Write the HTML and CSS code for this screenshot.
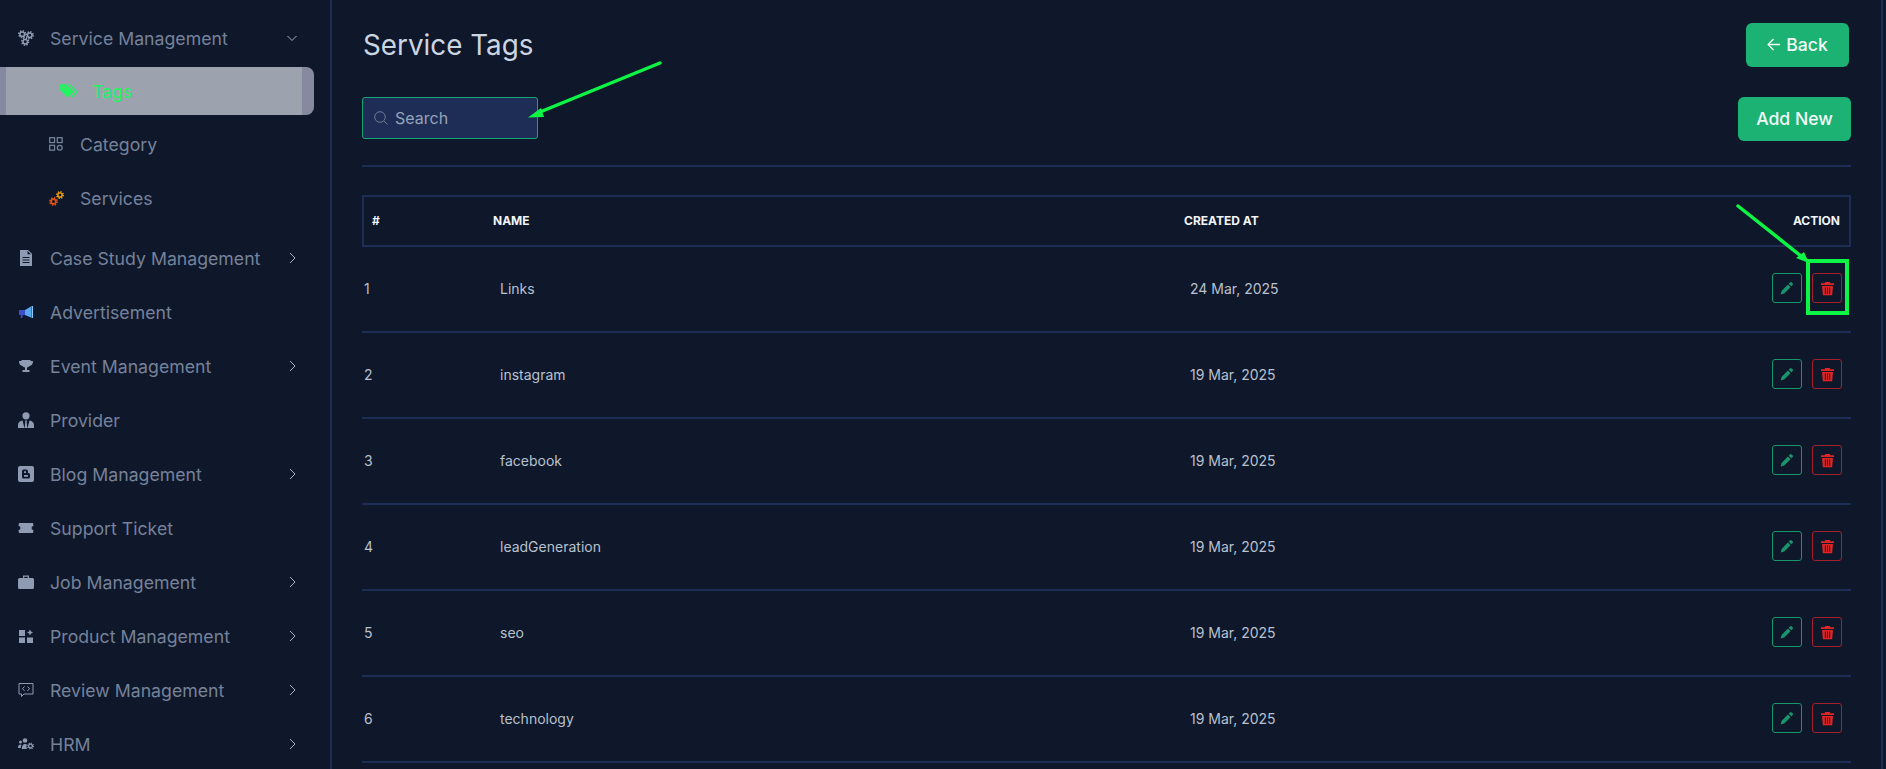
FILE: index.html
```html
<!DOCTYPE html>
<html lang="en">
    <head>
        <meta charset="UTF-8" />
        <meta name="viewport" content="width=device-width, initial-scale=1.0" />
        <title>Service Tags</title>
        <link rel="stylesheet" href="styles.css">
    </head>
    <body>
        <svg class="defs" width="0" height="0">
            <symbol id="gear" viewBox="0 0 12 12">
                <circle cx="6" cy="6" r="4.8" fill="none" stroke="currentColor" stroke-width="2.400" stroke-dasharray="1.900 1.870"/>
                <circle cx="6" cy="6" r="3.200" fill="none" stroke="currentColor" stroke-width="2.200"/>
            </symbol>
            <symbol id="pencil" viewBox="0 0 16 16">
                <path d="M11.3 1.6a1.4 1.4 0 0 1 2 0l1.1 1.1a1.4 1.4 0 0 1 0 2L13 6.1 9.9 3zM9 3.9 12.1 7l-7.3 7.3-4 1 1-4z" fill="currentColor"/>
            </symbol>
            <symbol id="trash" viewBox="0 0 16 16">
                <path d="M5.5 1h5l.6 1.4H15v1.8H1V2.400h3.900zM2.200 5.200h11.600L13 15.300H3zM5.200 7v6.500h1.100V7zM7.450 7v6.500h1.100V7zM9.700 7v6.500h1.100V7z" fill="currentColor" fill-rule="evenodd"/>
            </symbol>
            <symbol id="chev-right" viewBox="0 0 12 12">
                <path d="M4 1 9 6 4 11" fill="none" stroke="currentColor" stroke-width="1"/>
            </symbol>
        </svg>

        <div class="page">
            <aside class="sidebar">
                <nav class="nav">
                    <a class="nav-item">
                        <svg class="nav-icon" viewBox="0 0 16 16"><use href="#gear" x="0" y="0" width="8.500" height="8.500"/><use href="#gear" x="7.500" y="1" width="8.500" height="8.500"/><use href="#gear" x="3" y="7.500" width="8.500" height="8.500"/></svg>
                        <span>Service Management</span>
                        <svg class="chev" viewBox="0 0 12 12"><path d="M1.500 4 6 8.500 10.500 4" fill="none" stroke="currentColor" stroke-width="1"/></svg>
                    </a>
                    <div class="sub-list">
                        <a class="sub-item active">
                            <svg class="tag-icon" viewBox="0 0 17 14"><path d="M0 1.500A1.500 1.500 0 0 1 1.500 0h4.200l7 6.500a1.500 1.500 0 0 1 0 2.200L9 12.500a1.500 1.500 0 0 1-2.200 0L0 6z" fill="currentColor"/><path d="M8.500 0 15.800 6.800a1.500 1.500 0 0 1 0 2.200L12 13" fill="none" stroke="currentColor" stroke-width="1.500"/><circle cx="3.500" cy="3.500" r="1.100" fill="#9ca3af"/></svg>
                            <span>Tags</span>
                        </a>
                        <a class="sub-item">
                            <svg class="sub-icon" viewBox="0 0 13 13"><g fill="none" stroke="currentColor" stroke-width="1.100"><rect x=".6" y=".6" width="4.200" height="4.200"/><rect x="7.200" y=".6" width="4.200" height="4.200"/><rect x=".6" y="7.200" width="4.200" height="4.200"/><circle cx="9.300" cy="9.300" r="2.100"/></g></svg>
                            <span>Category</span>
                        </a>
                        <a class="sub-item">
                            <svg class="sub-icon" viewBox="0 0 15 15"><use href="#gear" x="0" y="6" width="9" height="9" color="#e2500f"/><use href="#gear" x="7" y="0" width="8" height="8" color="#f59e0b"/></svg>
                            <span>Services</span>
                        </a>
                    </div>
                    <a class="nav-item">
                        <svg class="nav-icon" viewBox="0 0 16 16"><path d="M2 0h8l4 3.800V16H2zM9.500 1v3.300H13zM4.500 7v1.100h7V7zM4.500 9.500v1.100h7V9.500zM4.500 12v1.100h7V12z" fill="currentColor" fill-rule="evenodd"/></svg>
                        <span>Case Study Management</span>
                        <svg class="chev"><use href="#chev-right"/></svg>
                    </a>
                    <a class="nav-item">
                        <svg class="nav-icon" viewBox="0 0 16 16"><path d="M1 6h6v5H5l-.8 3H2.600l.4-3H1z" fill="#3b50c8"/><path d="M7 6l6-3.500v11L7 11z" fill="#5aa9f5"/><path d="M13.500 2h1.500v12h-1.500z" fill="#8cc8fa"/></svg>
                        <span>Advertisement</span>
                    </a>
                    <a class="nav-item">
                        <svg class="nav-icon" viewBox="0 0 16 16"><path d="M3.500 2h9v1h2.500c0 3-1.200 4.500-3.500 5-.5.800-1.200 1.300-2.500 1.500V12h2.500v2h-7v-2H7V9.500C5.700 9.300 5 8.800 4.500 8 2.200 7.500 1 6 1 3h2.500z" fill="currentColor"/></svg>
                        <span>Event Management</span>
                        <svg class="chev"><use href="#chev-right"/></svg>
                    </a>
                    <a class="nav-item">
                        <svg class="nav-icon" viewBox="0 0 16 16"><circle cx="8" cy="3.800" r="3.600" fill="currentColor"/><path d="M0 16v-3c0-2.500 1.800-4.200 4.500-4.500L6.500 16zM16 16v-3c0-2.500-1.800-4.200-4.500-4.500L9.500 16zM7 8.500h2l-.3 1.500.6 6H6.700l.6-6z" fill="currentColor"/></svg>
                        <span>Provider</span>
                    </a>
                    <a class="nav-item">
                        <svg class="nav-icon" viewBox="0 0 16 16"><path d="M2 0h12a2 2 0 0 1 2 2v12a2 2 0 0 1-2 2H2a2 2 0 0 1-2-2V2a2 2 0 0 1 2-2zM5.500 3.500A1.500 1.500 0 0 0 4 5v6a1.500 1.500 0 0 0 1.500 1.500h5A1.500 1.500 0 0 0 12 11V8.500A1.500 1.500 0 0 0 10.500 7H10V5.500a2 2 0 0 0-2-2zM6 5.200h2V7H6zM6 9h4v1.800H6z" fill="currentColor" fill-rule="evenodd"/></svg>
                        <span>Blog Management</span>
                        <svg class="chev"><use href="#chev-right"/></svg>
                    </a>
                    <a class="nav-item">
                        <svg class="nav-icon" viewBox="0 0 16 10"><path d="M1 0h14l.5 3a2 2 0 0 0 0 4L15 10H1L.5 7a2 2 0 0 0 0-4z" fill="currentColor"/></svg>
                        <span>Support Ticket</span>
                    </a>
                    <a class="nav-item">
                        <svg class="nav-icon" viewBox="0 0 16 16"><path d="M5 1.500h6V4h3.500A1.500 1.500 0 0 1 16 5.500v8a1.500 1.500 0 0 1-1.500 1.500h-13A1.500 1.500 0 0 1 0 13.500v-8A1.500 1.500 0 0 1 1.500 4H5zM6.200 2.700V4h3.600V2.700z" fill="currentColor" fill-rule="evenodd"/></svg>
                        <span>Job Management</span>
                        <svg class="chev"><use href="#chev-right"/></svg>
                    </a>
                    <a class="nav-item">
                        <svg class="nav-icon" viewBox="0 0 16 16"><path d="M1 2h6v6H1zM1 9.500h6V15H1zM9 9.500h6V15H9zM12 1.500l1 2 2 1-2 1-1 2-1-2-2-1 2-1z" fill="currentColor"/></svg>
                        <span>Product Management</span>
                        <svg class="chev"><use href="#chev-right"/></svg>
                    </a>
                    <a class="nav-item">
                        <svg class="nav-icon" viewBox="0 0 16 16"><path d="M1 1.500h14v10.500H6l-2.500 2.500V12H1z" fill="none" stroke="currentColor" stroke-width="1"/><path d="M6.500 4.500 4.500 6.700l2 2.200M9.500 4.500l2 2.200-2 2.200" fill="none" stroke="currentColor" stroke-width="1"/></svg>
                        <span>Review Management</span>
                        <svg class="chev"><use href="#chev-right"/></svg>
                    </a>
                    <a class="nav-item">
                        <svg class="nav-icon" viewBox="0 0 16 12"><circle cx="2.500" cy="4" r="1.500" fill="currentColor"/><circle cx="7" cy="2.500" r="2.300" fill="currentColor"/><path d="M0 10c0-2 1-3.500 2.500-3.500l1 .5c-.6 1-.8 2-.8 3zM3.800 11c0-3 1.200-5 3.200-5 .9 0 1.500.3 2 .8-.8 1.200-.8 3 .1 4.200z" fill="currentColor"/><use href="#gear" x="9" y="4.500" width="7" height="7"/></svg>
                        <span>HRM</span>
                        <svg class="chev"><use href="#chev-right"/></svg>
                    </a>
                </nav>
            </aside>

            <main class="main">
                <header class="title-row">
                    <h1 class="title">Service Tags</h1>
                    <a class="btn btn-back">
                        <svg class="back-arrow" viewBox="0 0 14 14"><path d="M7 1 1.200 7 7 13M1.200 7H14" fill="none" stroke="currentColor" stroke-width="1.400"/></svg>
                        Back
                    </a>
                </header>

                <div class="toolbar">
                    <label class="search">
                        <svg class="search-icon" viewBox="0 0 14 14"><circle cx="6" cy="6" r="5.300" fill="none" stroke="currentColor" stroke-width="1"/><path d="M9.800 9.800 13.500 13.500" fill="none" stroke="currentColor" stroke-width="1"/></svg>
                        <input type="text" placeholder="Search" />
                    </label>
                    <a class="btn btn-add">Add New</a>
                </div>

                <table class="tags-table">
                    <colgroup>
                        <col class="col-num" />
                        <col class="col-name" />
                        <col class="col-date" />
                        <col />
                    </colgroup>
                    <thead>
                        <tr>
                            <th>#</th>
                            <th>NAME</th>
                            <th>CREATED AT</th>
                            <th class="right">ACTION</th>
                        </tr>
                    </thead>
                    <tbody>
                        <tr>
                            <td>1</td>
                            <td>Links</td>
                            <td>24 Mar, 2025</td>
                            <td class="actions"><a class="icon-btn edit"><svg><use href="#pencil"/></svg></a><a class="icon-btn del"><svg><use href="#trash"/></svg></a></td>
                        </tr>
                        <tr>
                            <td>2</td>
                            <td>instagram</td>
                            <td>19 Mar, 2025</td>
                            <td class="actions"><a class="icon-btn edit"><svg><use href="#pencil"/></svg></a><a class="icon-btn del"><svg><use href="#trash"/></svg></a></td>
                        </tr>
                        <tr>
                            <td>3</td>
                            <td>facebook</td>
                            <td>19 Mar, 2025</td>
                            <td class="actions"><a class="icon-btn edit"><svg><use href="#pencil"/></svg></a><a class="icon-btn del"><svg><use href="#trash"/></svg></a></td>
                        </tr>
                        <tr>
                            <td>4</td>
                            <td>leadGeneration</td>
                            <td>19 Mar, 2025</td>
                            <td class="actions"><a class="icon-btn edit"><svg><use href="#pencil"/></svg></a><a class="icon-btn del"><svg><use href="#trash"/></svg></a></td>
                        </tr>
                        <tr>
                            <td>5</td>
                            <td>seo</td>
                            <td>19 Mar, 2025</td>
                            <td class="actions"><a class="icon-btn edit"><svg><use href="#pencil"/></svg></a><a class="icon-btn del"><svg><use href="#trash"/></svg></a></td>
                        </tr>
                        <tr>
                            <td>6</td>
                            <td>technology</td>
                            <td>19 Mar, 2025</td>
                            <td class="actions"><a class="icon-btn edit"><svg><use href="#pencil"/></svg></a><a class="icon-btn del"><svg><use href="#trash"/></svg></a></td>
                        </tr>
                    </tbody>
                </table>
            </main>
        </div>

        <!-- annotations drawn on top of the screenshot -->
        <svg class="markup" viewBox="0 0 1886 769">
            <g fill="#0cf545" stroke="#0cf545">
                <path d="M660 63 540 112" fill="none" stroke-width="3.500" stroke-linecap="round"/>
                <path d="M528 117.500 541 108 544 117z" stroke="none"/>
                <path d="M1738 206 1801 256" fill="none" stroke-width="3.500" stroke-linecap="round"/>
                <path d="M1809 263 1796 258 1804 252z" stroke="none"/>
            </g>
            <rect x="1808" y="261" width="39" height="52" fill="none" stroke="#0cf545" stroke-width="4"/>
        </svg>
    </body>
</html>
```

FILE: styles.css
```css
* {
    margin: 0;
    padding: 0;
    box-sizing: border-box;
}

html, body {
    height: 100%;
    overflow: hidden;
}

body {
    background-color: #0f172a;
    color: #cbd5e1;
    font-family: Inter, "Liberation Sans", sans-serif;
    position: relative;
}

.defs {
    position: absolute;
}

.page {
    display: flex;
    height: 769px;
}

.sidebar {
    width: 332px;
    flex-shrink: 0;
    padding-top: 11px;
    border-right: 2px solid #1e2d55;
}

.nav-item {
    display: flex;
    align-items: center;
    height: 54px;
    padding-left: 18px;
    color: #75829a;
    font-size: 17.7px;
}

.nav-icon {
    width: 16px;
    height: 16px;
    flex-shrink: 0;
    margin-right: 16px;
    color: #8f9bb3;
}

.chev {
    width: 12px;
    height: 12px;
    margin-left: auto;
    margin-right: 32px;
    color: #a8b2c2;
}

.sub-list {
    display: flex;
    flex-direction: column;
    margin-bottom: 6px;
}

.sub-item {
    display: flex;
    align-items: center;
    height: 54px;
    padding-left: 49px;
    color: #75829a;
    font-size: 17.7px;
}

.sub-icon {
    width: 15px;
    height: 15px;
    margin-right: 16px;
}

.sub-item.active {
    height: 48px;
    width: 314px;
    margin: 2px 0;
    padding-left: 60px;
    color: #22f45f;
    border-radius: 0 8px 8px 0;
    background: linear-gradient(to right, #868aa0 6px, #9ca3af 6px, #9ca3af 302px, #868aa0 302px);
}

.tag-icon {
    width: 17px;
    height: 14px;
    margin-right: 15px;
}

.main {
    flex: 1;
    margin-right: 3px;
    padding: 23px 30px 0;
    border-right: 2px solid #1e2d55;
}

.title-row {
    display: flex;
    justify-content: space-between;
    align-items: center;
    padding-right: 2px;
    padding-left: 1px;
}

.title {
    font-size: 27.8px;
    font-weight: 400;
    line-height: 44px;
    color: #cbd5e1;
}

.btn {
    display: flex;
    align-items: center;
    justify-content: center;
    height: 44px;
    padding-bottom: 2px;
    border-radius: 6px;
    background-color: #1bb273;
    color: #f4fbf8;
    font-size: 17.6px;
    font-weight: 500;
}

.btn-back {
    width: 103px;
    gap: 6px;
}

.back-arrow {
    width: 13px;
    height: 13px;
}

.btn-add {
    width: 113px;
}

.toolbar {
    display: flex;
    justify-content: space-between;
    align-items: flex-start;
    margin-top: 30px;
    padding-bottom: 24px;
    border-bottom: 2px solid #1e2d55;
}

.search {
    display: flex;
    align-items: center;
    gap: 7px;
    width: 176px;
    height: 42px;
    padding-left: 11px;
    border: 1px solid #14a673;
    border-radius: 3px;
    background-color: #1e2d55;
}

.search-icon {
    width: 14px;
    height: 14px;
    flex-shrink: 0;
    color: #6f7c93;
}

.search input {
    width: 130px;
    border: none;
    outline: none;
    background: transparent;
    color: #94a3b8;
    font-family: inherit;
    font-size: 16px;
}

.search input::placeholder {
    color: #94a3b8;
    opacity: 1;
}

.tags-table {
    width: 1489px;
    margin-top: 28px;
    table-layout: fixed;
    border-collapse: separate;
    border-spacing: 0;

    .col-num {
        width: 122px;
    }
    .col-name {
        width: 691px;
    }
    .col-date {
        width: 400px;
    }

    th {
        height: 52px;
        padding: 0 9px 2px;
        border-top: 2px solid #1e2d55;
        border-bottom: 2px solid #1e2d55;
        color: #f1f5f9;
        font-size: 12px;
        font-weight: 700;
        text-align: left;
        &:first-child {
            padding-left: 8px;
            border-left: 2px solid #1e2d55;
        }
        &:last-child {
            border-right: 2px solid #1e2d55;
        }
        &.right {
            text-align: right;
        }
    }

    td {
        height: 86px;
        padding: 0 16px 2px;
        border-bottom: 2px solid #1e2d55;
        color: #b7c1cf;
        font-size: 14px;
        &:first-child {
            padding-left: 2px;
        }
        &:nth-child(3) {
            padding-left: 15px;
        }
    }

    td.actions {
        padding: 0 9px 2px 0;
        text-align: right;
    }
}

.icon-btn {
    display: inline-flex;
    align-items: center;
    justify-content: center;
    width: 30px;
    height: 30px;
    margin-left: 10px;
    border: 1px solid;
    border-radius: 3px;
    vertical-align: middle;

    svg {
        width: 14px;
        height: 14px;
    }

    &.edit {
        color: #17966b;
    }
    &.del {
        color: #a3202c;
    }
    &.del svg {
        width: 15px;
        height: 15px;
        color: #dc2626;
    }
}

.markup {
    position: absolute;
    top: 0;
    left: 0;
    width: 1886px;
    height: 769px;
    pointer-events: none;
}
```
